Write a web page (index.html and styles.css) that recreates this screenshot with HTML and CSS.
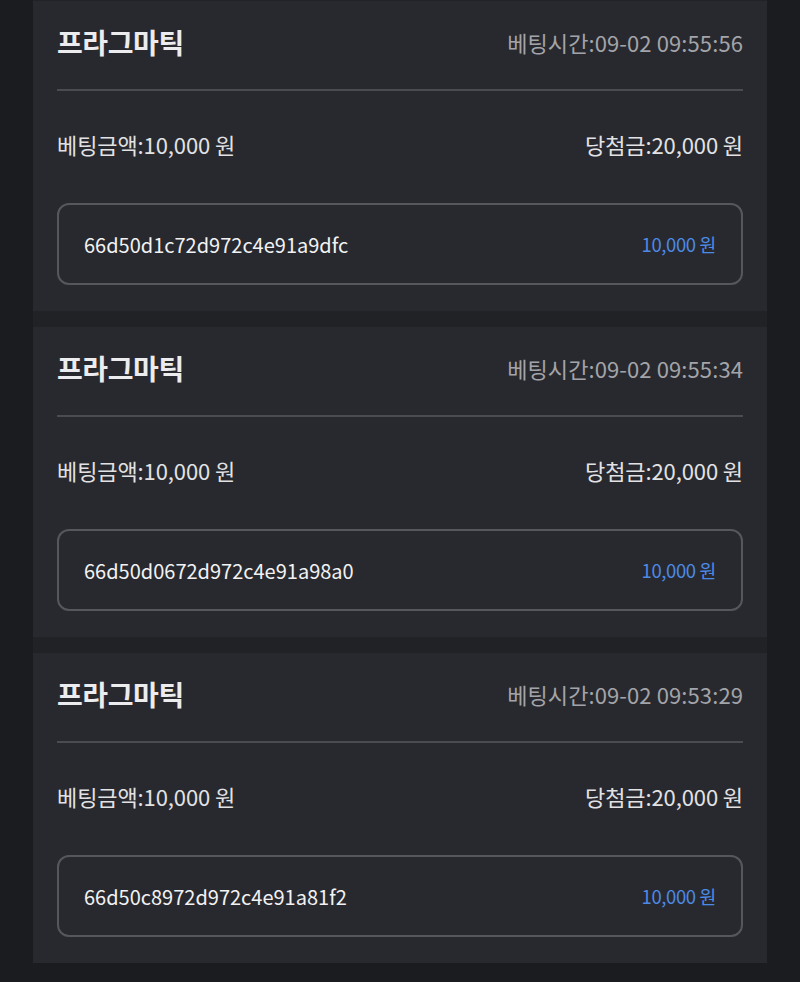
FILE: index.html
```html
<!DOCTYPE html>
<html>
<head>
    <title>베팅내역</title>
    <link rel="stylesheet" href="styles.css">
</head>
<body>
    <div class="list">
        <!-- bet 1 -->
        <div class="card">
            <div class="head">
                <span class="game">프라그마틱</span>
                <span class="time">베팅시간:09-02 09:55:56</span>
            </div>
            <div class="row">
                <span>베팅금액:10,000 원</span>
                <span>당첨금:20,000 원</span>
            </div>
            <div class="ticket">
                <span class="code">66d50d1c72d972c4e91a9dfc</span>
                <span class="amount">10,000 원</span>
            </div>
        </div>

        <!-- bet 2 -->
        <div class="card">
            <div class="head">
                <span class="game">프라그마틱</span>
                <span class="time">베팅시간:09-02 09:55:34</span>
            </div>
            <div class="row">
                <span>베팅금액:10,000 원</span>
                <span>당첨금:20,000 원</span>
            </div>
            <div class="ticket">
                <span class="code">66d50d0672d972c4e91a98a0</span>
                <span class="amount">10,000 원</span>
            </div>
        </div>

        <!-- bet 3 -->
        <div class="card">
            <div class="head">
                <span class="game">프라그마틱</span>
                <span class="time">베팅시간:09-02 09:53:29</span>
            </div>
            <div class="row">
                <span>베팅금액:10,000 원</span>
                <span>당첨금:20,000 원</span>
            </div>
            <div class="ticket">
                <span class="code">66d50c8972d972c4e91a81f2</span>
                <span class="amount">10,000 원</span>
            </div>
        </div>
    </div>
</body>
</html>
```

FILE: styles.css
```css
body {
    margin: 0;
    background: #1b1c20;
    font-family: "Noto Sans CJK KR", "Noto Sans", sans-serif;
    color: #e4e4e6;
}

.list {
    width: 734px;
    margin: 0 auto;
    padding-top: 1px;
    background: #212226;
    display: flex;
    flex-direction: column;
    gap: 16px;
}

.card {
    background: #28292e;
    padding: 0 24px 26px;
}

.head {
    height: 82px;
    padding-bottom: 6px;
    display: flex;
    align-items: center;
    justify-content: space-between;
    border-bottom: 2px solid #4b4c51;
}

.game {
    font-size: 28px;
    font-weight: 700;
    color: #ececee;
    letter-spacing: -0.4px;
}

.time {
    font-size: 22px;
    color: #a3a4a9;
    letter-spacing: 0.1px;
}

.row {
    height: 106px;
    padding-bottom: 6px;
    display: flex;
    align-items: center;
    justify-content: space-between;
    font-size: 22px;
    color: #e2e2e4;
    letter-spacing: -0.1px;
}

.ticket {
    height: 78px;
    border: 2px solid #56575c;
    border-radius: 12px;
    padding: 0 25px;
    display: flex;
    align-items: center;
    justify-content: space-between;
}

.code {
    font-size: 20px;
    color: #f2f2f4;
}

.amount {
    font-size: 18.5px;
    color: #4c8ae6;
    letter-spacing: -0.4px;
}
```
